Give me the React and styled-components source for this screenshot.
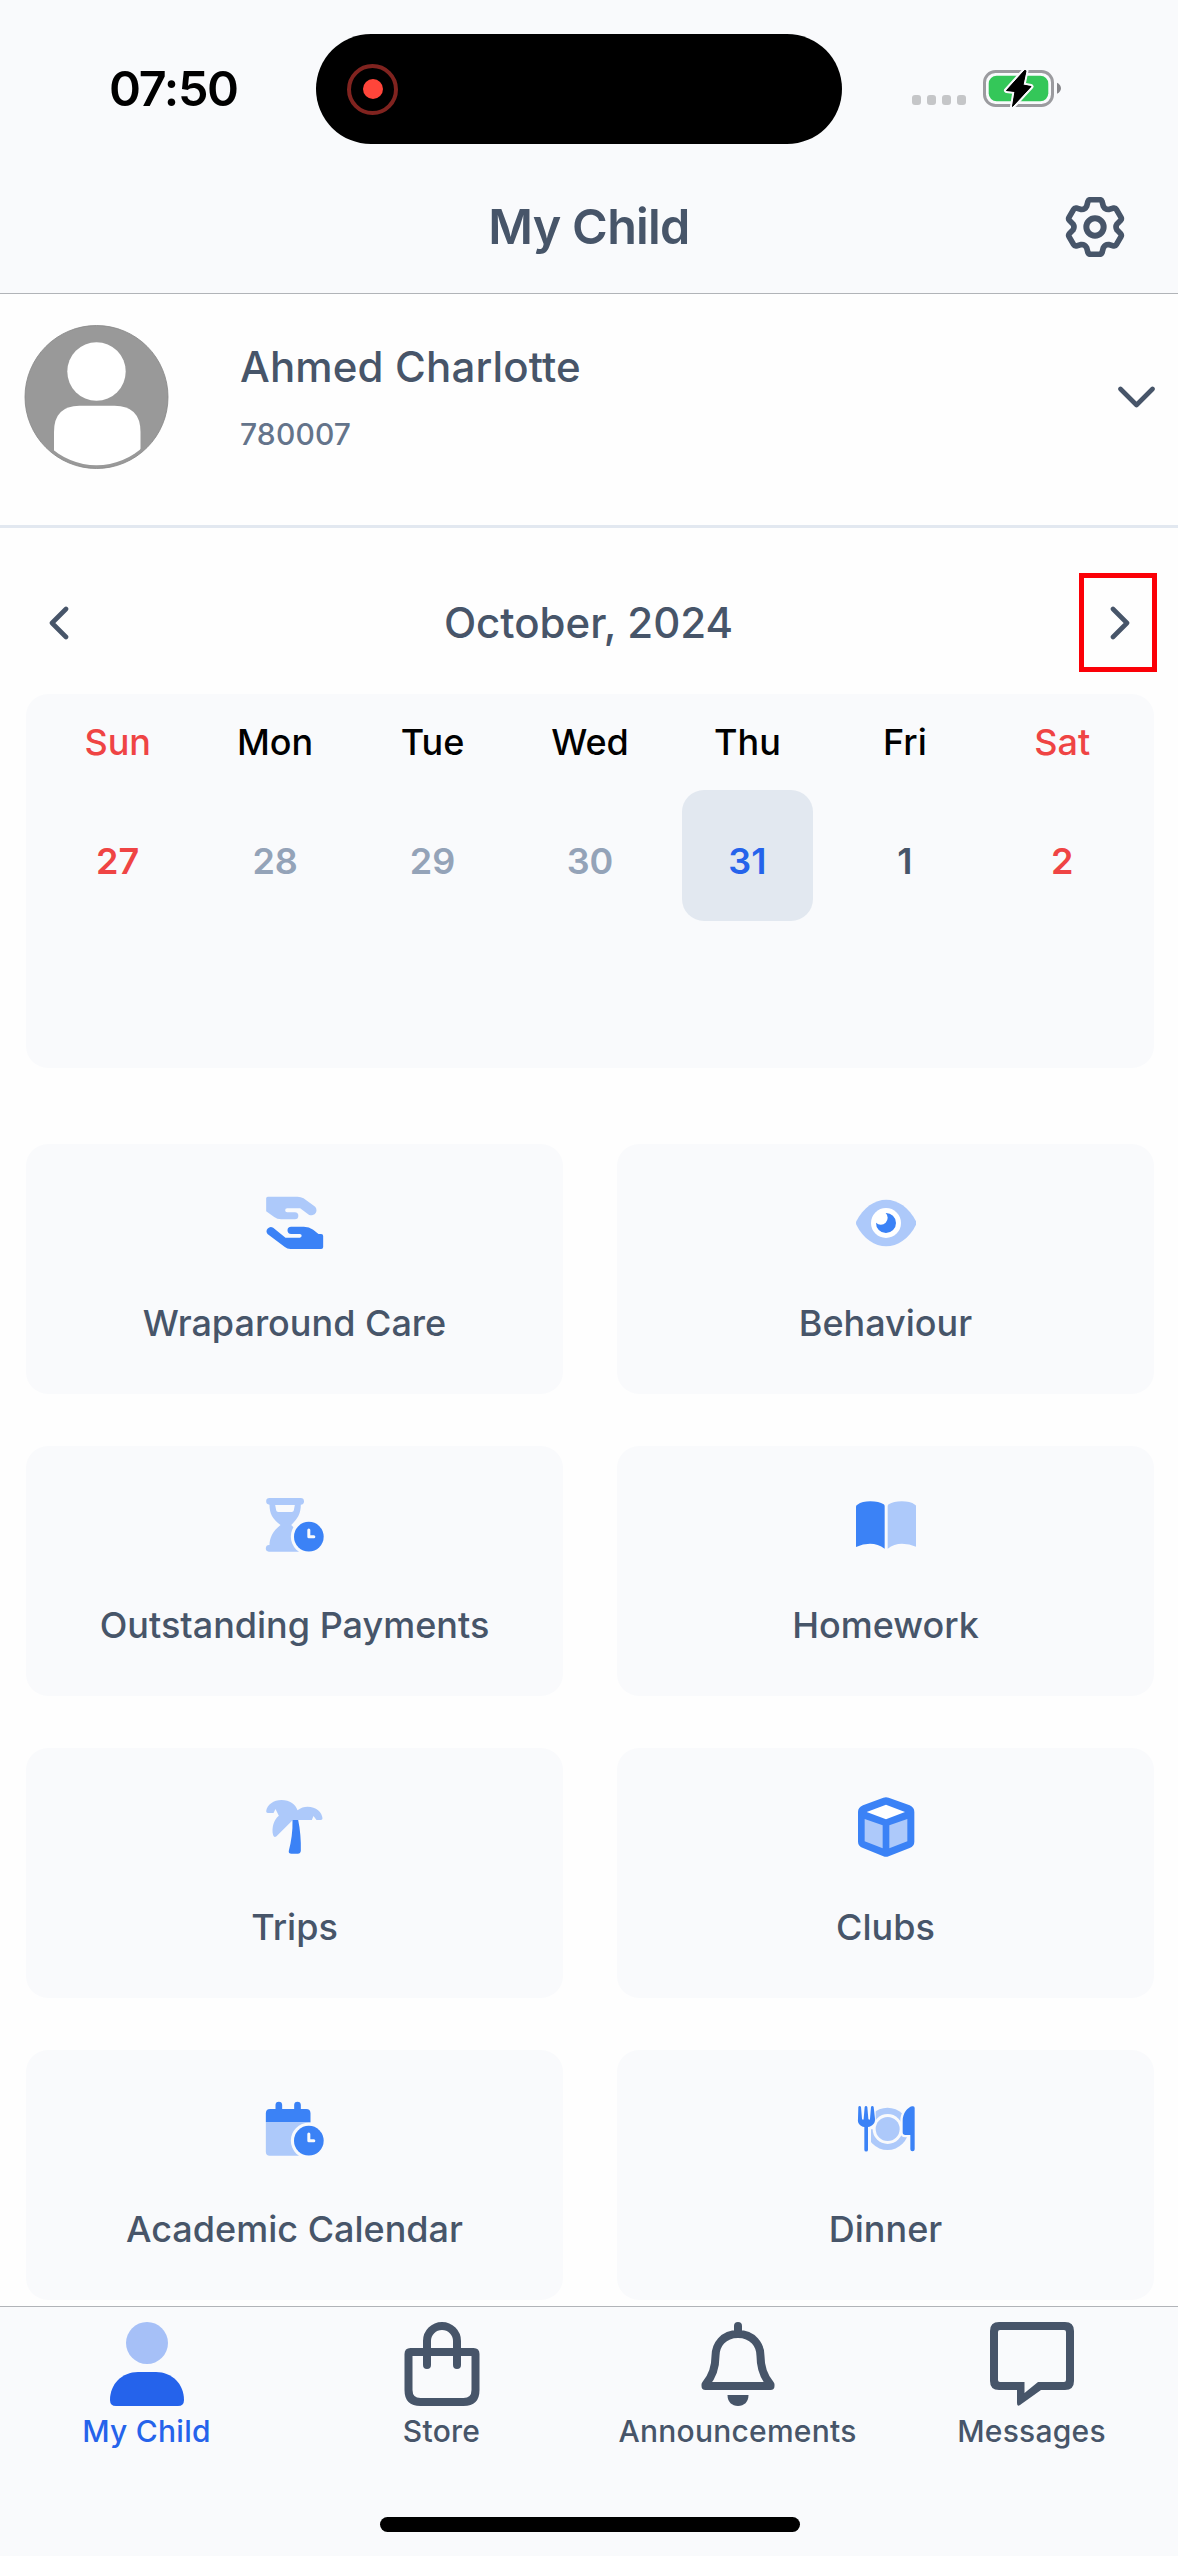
import React from "react";
import styled, { createGlobalStyle } from "styled-components";

const color = {
  surface: "#f9fafc",
  slate: "#475569",
  slateSoft: "#64748b",
  muted: "#94a3b8",
  hairline: "#b1b4b8",
  divider: "#e2e8f0",
  red: "#ef4444",
  blue: "#2563eb",
  iconBlue: "#3b82f6",
  iconLight: "#adc9fa",
};

const GlobalStyle = createGlobalStyle`
  *, *::before, *::after { box-sizing: border-box; }
  html, body { margin: 0; padding: 0; background: #fefefe; }
  body { font-family: Inter, "Liberation Sans", sans-serif; color: ${color.slate}; }
  svg { display: block; flex: none; }
  button { font: inherit; color: inherit; background: none; border: 0; padding: 0; margin: 0; }
`;

const Screen = styled.div`
  display: flex;
  flex-direction: column;
  width: 1178px;
  height: 2556px;
  overflow: hidden;
  background: #fefefe;
`;

const Header = styled.header`
  flex: none;
  height: 294px;
  background: ${color.surface};
  border-bottom: 1px solid ${color.hairline};
`;

const StatusBar = styled.div`
  display: grid;
  grid-template-columns: 316px 526px 1fr;
  height: 160px;
  padding-top: 34px;
`;

const Clock = styled.div`
  padding-left: 109px;
  font-size: 48.5px;
  font-weight: 600;
  line-height: 110px;
  letter-spacing: -1.3px;
  color: #000;
  white-space: nowrap;
`;

const Island = styled.div`
  display: flex;
  align-items: center;
  height: 110px;
  padding-left: 31px;
  border-radius: 55px;
  background: #000;
`;

const RecordRing = styled.div`
  display: grid;
  place-items: center;
  width: 51px;
  height: 51px;
  border: 4px solid #80231f;
  border-radius: 50%;
`;

const RecordDot = styled.div`
  width: 20px;
  height: 20px;
  border-radius: 50%;
  background: #ff453a;
`;

const StatusIcons = styled.div`
  display: flex;
  align-items: flex-start;
  padding: 35px 0 0 70px;
`;

const SignalDots = styled.div`
  display: flex;
  gap: 6px;
  padding-top: 26px;
  margin-right: 17px;
`;

const SignalDot = styled.span`
  width: 9px;
  height: 10px;
  border-radius: 3px;
  background: #c5c6c8;
`;

const TitleRow = styled.div`
  display: grid;
  grid-template-columns: 150px 1fr 150px;
  align-items: center;
  height: 133px;
`;

const Title = styled.h1`
  grid-column: 2;
  margin: 0;
  padding-top: 1px;
  text-align: center;
  font-size: 48.5px;
  font-weight: 600;
  line-height: 60px;
  letter-spacing: -0.7px;
  color: ${color.slate};
`;

const SettingsButton = styled.button`
  justify-self: end;
  margin-right: 53px;
`;

const Profile = styled.section`
  display: flex;
  flex: none;
  height: 234px;
  padding: 31px 23px 0 24px;
  border-bottom: 3px solid ${color.divider};
`;

const ProfileText = styled.div`
  flex: 1;
  padding: 17px 0 0 71px;
`;

const PupilName = styled.div`
  font-size: 42px;
  font-weight: 500;
  line-height: 50px;
  letter-spacing: 0.15px;
`;

const PupilId = styled.div`
  margin-top: 22px;
  font-size: 30px;
  font-weight: 450;
  line-height: 40px;
  letter-spacing: 0.15px;
  color: ${color.slateSoft};
`;

const ExpandButton = styled.button`
  align-self: flex-start;
  margin-top: 61px;
`;

const MonthBar = styled.div`
  display: flex;
  flex: none;
  align-items: center;
  justify-content: space-between;
  height: 99px;
  margin: 45px 21px 22px 20px;
`;

const MonthButton = styled.button`
  display: grid;
  place-items: center;
  width: 78px;
  height: 99px;
  padding-left: ${(p) => (p.$highlighted ? 4 : 0)}px;
  border: ${(p) => (p.$highlighted ? "5px solid #fb0007" : "5px solid transparent")};
`;

const MonthLabel = styled.div`
  font-size: 42px;
  font-weight: 500;
  line-height: 50px;
`;

const Week = styled.section`
  display: grid;
  flex: none;
  grid-template-columns: repeat(7, 1fr);
  grid-template-rows: 96px 131px;
  justify-items: center;
  height: 374px;
  margin: 0 24px 0 26px;
  padding: 0 13px;
  border-radius: 22px;
  background: ${color.surface};
`;

const Weekday = styled.div`
  font-size: 36px;
  font-weight: 500;
  line-height: 96px;
  color: ${(p) => (p.$weekend ? color.red : "#000")};
`;

const DayButton = styled.button`
  width: 131px;
  height: 131px;
  padding-top: 12px;
  border-radius: 22px;
  font-size: 36px;
  font-weight: 600;
  line-height: 119px;
  text-align: center;
  color: ${(p) => p.$tone};
  background: ${(p) => (p.$selected ? color.divider : "transparent")};
`;

const Tiles = styled.main`
  display: grid;
  flex: 1;
  grid-template-columns: 1fr 1fr;
  grid-auto-rows: 250px;
  gap: 52px 54px;
  min-height: 0;
  padding: 76px 24px 0 26px;
`;

const Tile = styled.button`
  display: flex;
  flex-direction: column;
  align-items: center;
  padding-top: 49px;
  border-radius: 22px;
  background: ${color.surface};
`;

const TileLabel = styled.span`
  margin-top: 45px;
  font-size: 36px;
  font-weight: 500;
  line-height: 50px;
  white-space: nowrap;
`;

const TabBar = styled.nav`
  display: grid;
  flex: none;
  grid-template-columns: 293px 297px 295px 293px;
  grid-template-rows: 210px 15px;
  height: 250px;
  border-top: 1px solid ${color.hairline};
  background: ${color.surface};
`;

const Tab = styled.button`
  display: flex;
  flex-direction: column;
  align-items: center;
  padding-top: 15px;
  color: ${(p) => (p.$active ? color.blue : color.slate)};
`;

const TabLabel = styled.span`
  margin-top: 5px;
  font-size: 30px;
  font-weight: 500;
  line-height: 40px;
  letter-spacing: 0.25px;
  white-space: nowrap;
`;

const HomeIndicator = styled.div`
  grid-column: 1 / -1;
  justify-self: center;
  width: 420px;
  height: 15px;
  margin-left: 2px;
  border-radius: 8px;
  background: #000;
`;

/* Six identical teeth, each rotated by 60 degrees round the centre. */
const gearPath = (() => {
  const turn = (x, y, k) => {
    const a = (k * Math.PI) / 3;
    return `${(x * Math.cos(a) - y * Math.sin(a)).toFixed(2)} ${(x * Math.sin(a) + y * Math.cos(a)).toFixed(2)}`;
  };
  let d = "";
  for (let k = 0; k < 6; k += 1) {
    d += `${k ? "L" : "M"}${turn(-25, -62, k)} L${turn(-21, -77, k)} Q${turn(-19, -82, k)} ${turn(-14, -82, k)} `;
    d += `L${turn(14, -82, k)} Q${turn(19, -82, k)} ${turn(21, -77, k)} L${turn(25, -62, k)} `;
    d += `Q${turn(30, -52, k)} ${turn(-25, -62, k + 1)} `;
  }
  return `${d}Z`;
})();

const GearIcon = () => (
  <svg width="60" height="60" viewBox="-90 -90 180 180" fill="none" stroke={color.slate} strokeLinejoin="round">
    <path d={gearPath} strokeWidth="17" />
    <circle r="26" strokeWidth="18" />
  </svg>
);

const BatteryIcon = () => (
  <svg width="80" height="40" viewBox="0 -1 80 40">
    <rect x="1.5" y="1.5" width="68" height="34" rx="11" fill="none" stroke="#9b9b9f" strokeWidth="3" />
    <rect x="5.7" y="5.7" width="59.6" height="25.6" rx="8" fill="#34c759" />
    <path d="M74 12.7c5.3 2.4 5.3 8.600 0 11z" fill="#86868a" />
    <path
      d="M41.500 0.500 L23.500 20.500 L32 21.500 L29.500 36.500 L48 16.500 L40 15 L43 0.800Z"
      fill="#000"
      stroke={color.surface}
      strokeWidth="5"
      strokeLinejoin="round"
      paintOrder="stroke"
    />
    <path d="M41.500 0.500 L23.500 20.500 L32 21.500 L29.500 36.500 L48 16.500 L40 15 L43 0.800Z" stroke="#000" strokeLinejoin="round" />
  </svg>
);

const Avatar = () => (
  <svg width="145" height="145" viewBox="23.500 325 145 145">
    <defs>
      <clipPath id="avatar-inner">
        <circle cx="96" cy="397" r="68.300" />
      </clipPath>
    </defs>
    <circle cx="96" cy="397" r="71.500" fill="#999" stroke="#858585" strokeWidth="0.800" />
    <circle cx="96" cy="371.500" r="29.200" fill="#fff" />
    <path d="M53.500 475V432Q53.500 405.700 79 405.700H114Q140 405.700 140 432V475Z" fill="#fff" clipPath="url(#avatar-inner)" />
  </svg>
);

const Chevron = ({ width, height, d }) => (
  <svg width={width} height={height} viewBox={`0 0 ${width} ${height}`} fill="none" stroke={color.slate} strokeWidth="4.600" strokeLinecap="round" strokeLinejoin="round">
    <path d={d} />
  </svg>
);

const TileIcon = ({ box, children }) => (
  <svg width="60" height="60" viewBox={box} fill={color.iconBlue}>
    {children}
  </svg>
);

const ClockBadge = ({ cy }) => (
  <>
    <circle cx="235" cy={cy} r="54" fill={color.surface} />
    <circle cx="235" cy={cy} r="44.500" />
    <path d={`M235 ${cy - 20}V${cy}H250`} fill="none" stroke={color.surface} strokeWidth="9" strokeLinecap="round" strokeLinejoin="round" />
  </>
);

const HandsIcon = () => (
  <TileIcon box="103.500 69 180 180">
    <path
      fill={color.iconLight}
      d="M112 80H201Q211 80 219 85L250 107A14 14 0 0 1 235 134L209 115H170A5.500 5.500 0 0 0 170 127H193A10.500 10.500 0 0 1 193 148H152Q140 148 131 141L107 124V85Q107 80 112 80Z"
    />
    <path d="M128 173L165 203H208A5.500 5.500 0 0 0 208 192H182A11 11 0 0 1 182 170H220Q236 170 248 179L264 192H272Q278 192 278 198V231Q278 237 272 237H180Q170 237 163 231L111 192A13 13 0 0 1 128 173Z" />
  </TileIcon>
);

const EyeIcon = () => (
  <TileIcon box="105 69 180 180">
    <path fill={color.iconLight} d="M106 154C126 112 162 89 195.500 89S265 112 285 154Q287 159 285 164C265 206 229 229 195.500 229S126 206 106 164Q104 159 106 154Z" />
    <circle cx="195" cy="159" r="45" fill="#fff" />
    <path d="M194 129A30 30 0 1 1 165 158A19 19 0 0 0 194 129Z" />
  </TileIcon>
);

const HourglassIcon = () => (
  <TileIcon box="103.500 75 180 180">
    <path
      fill={color.iconLight}
      fillRule="evenodd"
      d="M117 84H210A10 10 0 0 1 211 104C211 130 201 147 182 165C205 184 211 205 211 225V245H115A10 10 0 0 1 117 225C117 205 126 184 150 165C126 147 117 130 117 104A10 10 0 0 1 117 84ZM134 105L137 121Q138 126 143 126H184Q189 126 190 121L193 105Z"
    />
    <ClockBadge cy={200} />
  </TileIcon>
);

const BookIcon = () => (
  <TileIcon box="105 75 180 180">
    <path d="M105 110Q105 106 109 104Q124 94 148 94Q174 94 188 103Q191 105 191 109V236Q171 221 147 221Q126 221 105 231Z" />
    <path fill={color.iconLight} d="M200 109Q200 105 203 103Q218 94 242 94Q267 94 282 104Q286 106 286 110V231Q266 221 243 221Q219 221 200 236Z" />
  </TileIcon>
);

const PalmIcon = () => (
  <TileIcon box="103.500 81 180 180">
    <path
      fill={color.iconLight}
      d="M112 129Q107 129 107 124C109 104 130 90 153 90C178 90 196 103 201 121C211 113 221 110 231 110C257 110 275 127 276 145Q276 150 271 150H258L249 138L244 150H187L138 199Q131 204 128 196C122 173 131 147 145 137L135 117L129 129Z"
    />
    <path d="M186 150H203C209 178 212 213 211 242Q210 251 202 251H183Q173 251 175 242C182 215 187 185 186 150Z" />
  </TileIcon>
);

const CubeIcon = () => (
  <TileIcon box="105 81 180 180">
    <path d="M187 83Q195 80 203 83L266 106Q280 112 280 126V215Q280 228 266 234L203 259Q195 262 187 259L126 234Q111 228 111 215V126Q111 112 126 106Z" />
    <path fill="#fff" d="M137 126L195 104L252 126L195 148Z" />
    <path fill={color.iconLight} d="M131 147L185 166V235L131 214ZM205 166L259 147V214L205 235Z" />
  </TileIcon>
);

const CalendarIcon = () => (
  <TileIcon box="103.500 87 180 180">
    <path fill={color.iconLight} d="M106 156H240V257H118Q106 257 106 245Z" />
    <path d="M106 156V130Q106 117 119 117H135V105A10 10 0 0 1 155 105V117H191V105A10 10 0 0 1 211 105V117H227Q240 117 240 130V156Z" />
    <ClockBadge cy={212} />
  </TileIcon>
);

const forkPath =
  "M112 111Q113 108 116 108T120 111L123 146Q124 149 126 149T128 146L131 111Q132 108 135 108T139 111L142 146Q143 149 145 149T147 146L150 111Q151 108 154 108T158 111L162 146C163 160 154 168 141 171V239A5.500 5.500 0 0 1 130 239V171C117 168 109 160 111 146Z";
const knifePath =
  "M273 109Q281 107 281 114V238Q281 244 274.500 244T268 238V195H253Q245 195 245 187V152C245 130 260 112 273 109Z";

const DinnerIcon = () => (
  <TileIcon box="105 87 180 180">
    <circle cx="199.500" cy="176.500" r="63.500" fill={color.iconLight} />
    <path d="M105 95H164V178H150V250H105Z" fill={color.surface} />
    <circle cx="200" cy="177" r="45" fill={color.surface} />
    <circle cx="200" cy="177" r="36" fill={color.iconLight} />
    <path d={knifePath} stroke={color.surface} strokeWidth="14" paintOrder="stroke" />
    <path d={forkPath} />
  </TileIcon>
);

const TabIcon = ({ children }) => (
  <svg width="84" height="84" viewBox="0 0 84 84" fill="none" stroke="currentColor" strokeWidth="8" strokeLinecap="round" strokeLinejoin="round">
    {children}
  </svg>
);

const PersonIcon = () => (
  <TabIcon>
    <circle cx="42" cy="21" r="21" fill="#a6c0f7" stroke="none" />
    <path d="M5 78C5 62 17 50 33 50H51C67 50 79 62 79 78Q79 84 73 84H11Q5 84 5 78Z" fill="currentColor" stroke="none" />
  </TabIcon>
);

const StoreIcon = () => (
  <TabIcon>
    <path d="M10.500 30H73.500Q75.500 30 75.500 32V68Q75.500 80 63.500 80H20.500Q8.500 80 8.500 68V32Q8.500 30 10.500 30Z" />
    <path d="M27 43V19A15 15 0 0 1 57 19V43" />
  </TabIcon>
);

const BellIcon = () => (
  <TabIcon>
    <path d="M42 4V11M42 12C27 12 19.500 23 19.500 34C19.500 47 16 55 9.500 62.500V64H74.500V62.500C68 55 64.500 47 64.500 34C64.500 23 57 12 42 12Z" />
    <path d="M31.500 73H52.500C52.500 80 48 84 42 84S31.500 80 31.500 73Z" fill="currentColor" stroke="none" />
  </TabIcon>
);

const MessageIcon = () => (
  <TabIcon>
    <path
      fill="currentColor"
      stroke="none"
      fillRule="evenodd"
      d="M9 0H75Q84 0 84 9V59Q84 68 75 68H51L30 83Q27 85 27 81V68H9Q0 68 0 59V9Q0 0 9 0ZM10 8Q8 8 8 10V58Q8 60 10 60H34.500V71L48 60H74Q76 60 76 58V10Q76 8 74 8Z"
    />
  </TabIcon>
);

const weekdays = ["Sun", "Mon", "Tue", "Wed", "Thu", "Fri", "Sat"];

const days = [
  { day: 27, tone: color.red },
  { day: 28, tone: color.muted },
  { day: 29, tone: color.muted },
  { day: 30, tone: color.muted },
  { day: 31, tone: color.blue, selected: true },
  { day: 1, tone: color.slate },
  { day: 2, tone: color.red },
];

const tiles = [
  { label: "Wraparound Care", Icon: HandsIcon },
  { label: "Behaviour", Icon: EyeIcon },
  { label: "Outstanding Payments", Icon: HourglassIcon },
  { label: "Homework", Icon: BookIcon },
  { label: "Trips", Icon: PalmIcon },
  { label: "Clubs", Icon: CubeIcon },
  { label: "Academic Calendar", Icon: CalendarIcon },
  { label: "Dinner", Icon: DinnerIcon },
];

const tabs = [
  { label: "My Child", Icon: PersonIcon, active: true },
  { label: "Store", Icon: StoreIcon },
  { label: "Announcements", Icon: BellIcon },
  { label: "Messages", Icon: MessageIcon },
];

export default function App() {
  return (
    <>
      <GlobalStyle />
      <Screen>
        <Header>
          <StatusBar>
            <Clock>07:50</Clock>
            <Island>
              <RecordRing>
                <RecordDot />
              </RecordRing>
            </Island>
            <StatusIcons>
              <SignalDots>
                <SignalDot />
                <SignalDot />
                <SignalDot />
                <SignalDot />
              </SignalDots>
              <BatteryIcon />
            </StatusIcons>
          </StatusBar>
          <TitleRow>
            <Title>My Child</Title>
            <SettingsButton aria-label="Settings">
              <GearIcon />
            </SettingsButton>
          </TitleRow>
        </Header>

        <Profile>
          <Avatar />
          <ProfileText>
            <PupilName>Ahmed Charlotte</PupilName>
            <PupilId>780007</PupilId>
          </ProfileText>
          <ExpandButton aria-label="Choose child">
            <Chevron width={37} height={22} d="M2.500 3L18.500 19L34.500 3" />
          </ExpandButton>
        </Profile>

        <MonthBar>
          <MonthButton aria-label="Previous month">
            <Chevron width={20} height={34} d="M17 3L3 17L17 31" />
          </MonthButton>
          <MonthLabel>October, 2024</MonthLabel>
          <MonthButton $highlighted aria-label="Next month">
            <Chevron width={20} height={34} d="M3 3L17 17L3 31" />
          </MonthButton>
        </MonthBar>

        <Week>
          {weekdays.map((name, i) => (
            <Weekday key={name} $weekend={i === 0 || i === 6}>
              {name}
            </Weekday>
          ))}
          {days.map(({ day, tone, selected }) => (
            <DayButton key={day} $tone={tone} $selected={selected}>
              {day}
            </DayButton>
          ))}
        </Week>

        <Tiles>
          {tiles.map(({ label, Icon }) => (
            <Tile key={label}>
              <Icon />
              <TileLabel>{label}</TileLabel>
            </Tile>
          ))}
        </Tiles>

        <TabBar>
          {tabs.map(({ label, Icon, active }) => (
            <Tab key={label} $active={active}>
              <Icon />
              <TabLabel>{label}</TabLabel>
            </Tab>
          ))}
          <HomeIndicator />
        </TabBar>
      </Screen>
    </>
  );
}
